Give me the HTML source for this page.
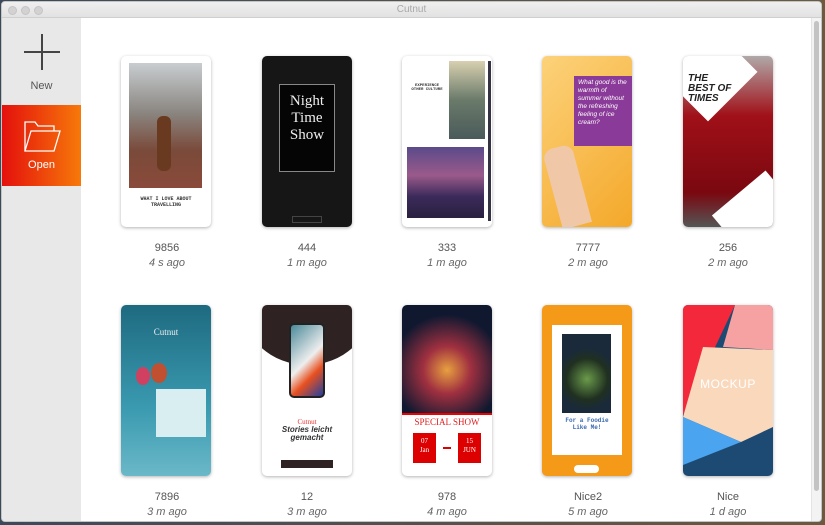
<!DOCTYPE html>
<html><head><meta charset="utf-8"><style>
*{margin:0;padding:0;box-sizing:border-box}
body{width:825px;height:525px;overflow:hidden;background:linear-gradient(90deg,#3a4a5a,#6a5a40);font-family:"Liberation Sans",sans-serif;position:relative}
.win{position:absolute;left:1px;top:1px;width:821px;height:521px;background:#fff;border-radius:4px;overflow:hidden;border:1px solid #c4c4c4}
.tb{position:absolute;left:0;top:0;right:0;height:16px;background:linear-gradient(#efefef,#e2e2e2);border-bottom:1px solid #cfcfcf;text-align:center;font-size:10px;color:#a8a8a8;line-height:16px}
.dot{position:absolute;top:4px;width:9px;height:9px;border-radius:50%;background:#d2d2d2;border:1px solid #c4c4c4}
.side{position:absolute;left:0;top:16px;width:79px;bottom:0;background:#e8e8e8}
.new{position:absolute;left:0;top:0;width:79px;height:88px;text-align:center;color:#555;font-size:11px}
.open{position:absolute;left:0;top:87px;width:79px;height:81px;background:linear-gradient(90deg,#e4100c,#f7790a);color:#fff;font-size:11px;text-align:center}
.sb{position:absolute;right:0;top:16px;width:10px;bottom:0;background:#f3f3f3;border-left:1px solid #e4e4e4}
.th{position:absolute;left:2px;top:3px;width:5px;height:470px;background:#c3c3c3;border-radius:3px}
.card{position:absolute;width:90px;height:171px;border-radius:5px;overflow:hidden;box-shadow:0 1px 3px rgba(0,0,0,.3);background:#fff}
.lab{position:absolute;width:140px;text-align:center;font-size:11px;color:#555}
.lab i{display:block;color:#666;margin-top:3px}
</style></head><body>
<div class="win">
<div class="tb">Cutnut<span class="dot" style="left:6px"></span><span class="dot" style="left:19px"></span><span class="dot" style="left:32px"></span></div>
<div class="side">
<div class="new"><svg width="40" height="40" style="position:absolute;left:20px;top:14px"><path d="M20 2V38M2 20H38" stroke="#444" stroke-width="2"/></svg><div style="position:absolute;top:62px;width:79px">New</div></div>
<div class="open"><svg width="40" height="36" style="position:absolute;left:20px;top:14px" fill="none" stroke="#fff" stroke-width="1.3"><path d="M3 32V3H13L16 7H32V12"/><path d="M3 32L9 12H38L32 32Z"/></svg><div style="position:absolute;top:54px;width:79px">Open</div></div>
</div>
<div class="sb"><div class="th"></div></div>

<!-- row1 -->
<div class="card" style="left:119px;top:54px"><div style="position:absolute;left:8px;top:7px;width:73px;height:125px;background:linear-gradient(#c8cdd0,#8a8580 40%,#7a4a3a 70%,#8a4a3a)"></div><div style="position:absolute;left:36px;top:60px;width:14px;height:55px;background:#6a3a20;border-radius:6px"></div><div style="position:absolute;top:140px;width:90px;text-align:center;font:bold 5px 'Liberation Mono';color:#333">WHAT I LOVE ABOUT<br>TRAVELLING</div></div>
<div class="card" style="left:260px;top:54px;background:#161616"><div style="position:absolute;left:17px;top:28px;width:56px;height:88px;border:1px solid #888;background:#050505;color:#eee;font:15px/17px 'Liberation Serif';text-align:center;padding-top:8px">Night<br>Time<br>Show</div><div style="position:absolute;left:30px;top:160px;width:30px;height:7px;border:1px solid #444"></div></div>
<div class="card" style="left:400px;top:54px"><div style="position:absolute;left:47px;top:5px;width:36px;height:78px;background:linear-gradient(#d8d0b0,#6a7a6a 50%,#4a5a5a)"></div><div style="position:absolute;left:5px;top:91px;width:77px;height:71px;background:linear-gradient(#5a4a8a,#9a5a8a 40%,#3a2a5a 70%,#2a2040)"></div><div style="position:absolute;left:86px;top:5px;width:3px;height:160px;background:#334"></div><div style="position:absolute;left:7px;top:28px;width:36px;text-align:center;font:bold 4px 'Liberation Mono';color:#333">EXPERIENCE OTHER CULTURE</div></div>
<div class="card" style="left:540px;top:54px;background:linear-gradient(135deg,#fcd27a,#f4a82a)"><div style="position:absolute;left:32px;top:20px;width:58px;height:70px;background:#8a3a98;color:#fff;font:italic 6.5px/8px 'Liberation Sans';padding:3px 4px">What good is the warmth of summer without the refreshing feeling of ice cream?</div><div style="position:absolute;left:10px;top:90px;width:30px;height:81px;background:#f0c8a8;border-radius:10px 10px 0 0;transform:rotate(-15deg)"></div></div>
<div class="card" style="left:681px;top:54px;background:linear-gradient(#b0a8a8,#a01018 35%,#7a0810 80%,#555)"><div style="position:absolute;left:-10px;top:-5px;width:70px;height:70px;background:#fff;transform:rotate(45deg) translate(-10px,-10px)"></div><div style="position:absolute;left:5px;top:18px;font:bold italic 10px/10px 'Liberation Sans';color:#222">THE<br>BEST OF<br>TIMES</div><div style="position:absolute;left:40px;top:130px;width:70px;height:60px;background:#fff;transform:rotate(-40deg)"></div></div>

<div class="lab" style="left:95px;top:240px">9856<i>4 s ago</i></div>
<div class="lab" style="left:235px;top:240px">444<i>1 m ago</i></div>
<div class="lab" style="left:375px;top:240px">333<i>1 m ago</i></div>
<div class="lab" style="left:516px;top:240px">7777<i>2 m ago</i></div>
<div class="lab" style="left:656px;top:240px">256<i>2 m ago</i></div>

<!-- row2 -->
<div class="card" style="left:119px;top:303px;background:linear-gradient(#1e6a80,#3a9ab0 60%,#6ab8c8)"><div style="position:absolute;top:22px;width:90px;text-align:center;font:9px 'Liberation Serif';color:#eee">Cutnut</div><div style="position:absolute;left:35px;top:84px;width:50px;height:48px;background:#d8eef0"></div><div style="position:absolute;left:15px;top:62px;width:14px;height:18px;border-radius:50%;background:#d04060"></div><div style="position:absolute;left:30px;top:58px;width:16px;height:20px;border-radius:50%;background:#c05030"></div></div>
<div class="card" style="left:260px;top:303px"><div style="position:absolute;left:-20px;top:-60px;width:130px;height:120px;border-radius:50%;background:#2e2222"></div><div style="position:absolute;left:27px;top:18px;width:36px;height:75px;border-radius:5px;background:linear-gradient(135deg,#4a8a9a,#eee 50%,#e85020 70%,#2040a0);border:2px solid #222"></div><div style="position:absolute;top:113px;width:90px;text-align:center;font:italic bold 8px/8px 'Liberation Sans';color:#333"><span style="color:#e33;font:7px 'Liberation Serif'">Cutnut</span><br>Stories leicht<br>gemacht</div><div style="position:absolute;left:19px;top:155px;width:52px;height:8px;background:#2e2222"></div></div>
<div class="card" style="left:400px;top:303px"><div style="position:absolute;left:0;top:0;width:90px;height:108px;background:radial-gradient(circle at 45px 65px,#e8a040,#a03040 30%,#101830 70%)"></div><div style="position:absolute;top:108px;width:90px;height:2px;background:#e00"></div><div style="position:absolute;top:112px;width:90px;text-align:center;font:9px 'Liberation Serif';color:#e02020">SPECIAL SHOW</div><div style="position:absolute;left:11px;top:128px;width:23px;height:30px;background:#d00;color:#fff;font:7px/9px 'Liberation Serif';text-align:center;padding-top:4px">07<br>Jan</div><div style="position:absolute;left:56px;top:128px;width:23px;height:30px;background:#d00;color:#fff;font:7px/9px 'Liberation Serif';text-align:center;padding-top:4px">15<br>JUN</div><div style="position:absolute;left:41px;top:142px;width:8px;height:2px;background:#d00"></div></div>
<div class="card" style="left:540px;top:303px;background:#f59a18"><div style="position:absolute;left:10px;top:20px;width:70px;height:130px;background:#fff"></div><div style="position:absolute;left:20px;top:29px;width:49px;height:79px;background:radial-gradient(circle at 25px 45px,#6a9a4a,#203020 40%,#1a2a3a 60%)"></div><div style="position:absolute;top:112px;width:90px;text-align:center;font:bold 6px 'Liberation Mono';color:#3a6ab0">For a Foodie<br>Like Me!</div><div style="position:absolute;left:32px;top:160px;width:25px;height:8px;border-radius:4px;background:#fff"></div></div>
<div class="card" style="left:681px;top:303px;background:#1c4a72"><svg width="90" height="171" style="position:absolute;left:0;top:0"><polygon points="0,0 52,0 0,110" fill="#f3283a"/><polygon points="52,0 90,0 90,45 40,42" fill="#f7a2a2"/><polygon points="20,42 90,45 90,122 58,137 0,112" fill="#fad8bc"/><polygon points="0,112 58,137 0,160" fill="#4aa4f0"/></svg><div style="position:absolute;top:72px;width:90px;text-align:center;font:12px 'Liberation Sans';color:#fff;letter-spacing:.5px">MOCKUP</div></div>

<div class="lab" style="left:95px;top:489px">7896<i>3 m ago</i></div>
<div class="lab" style="left:235px;top:489px">12<i>3 m ago</i></div>
<div class="lab" style="left:375px;top:489px">978<i>4 m ago</i></div>
<div class="lab" style="left:516px;top:489px">Nice2<i>5 m ago</i></div>
<div class="lab" style="left:656px;top:489px">Nice<i>1 d ago</i></div>
</div>
</body></html>
